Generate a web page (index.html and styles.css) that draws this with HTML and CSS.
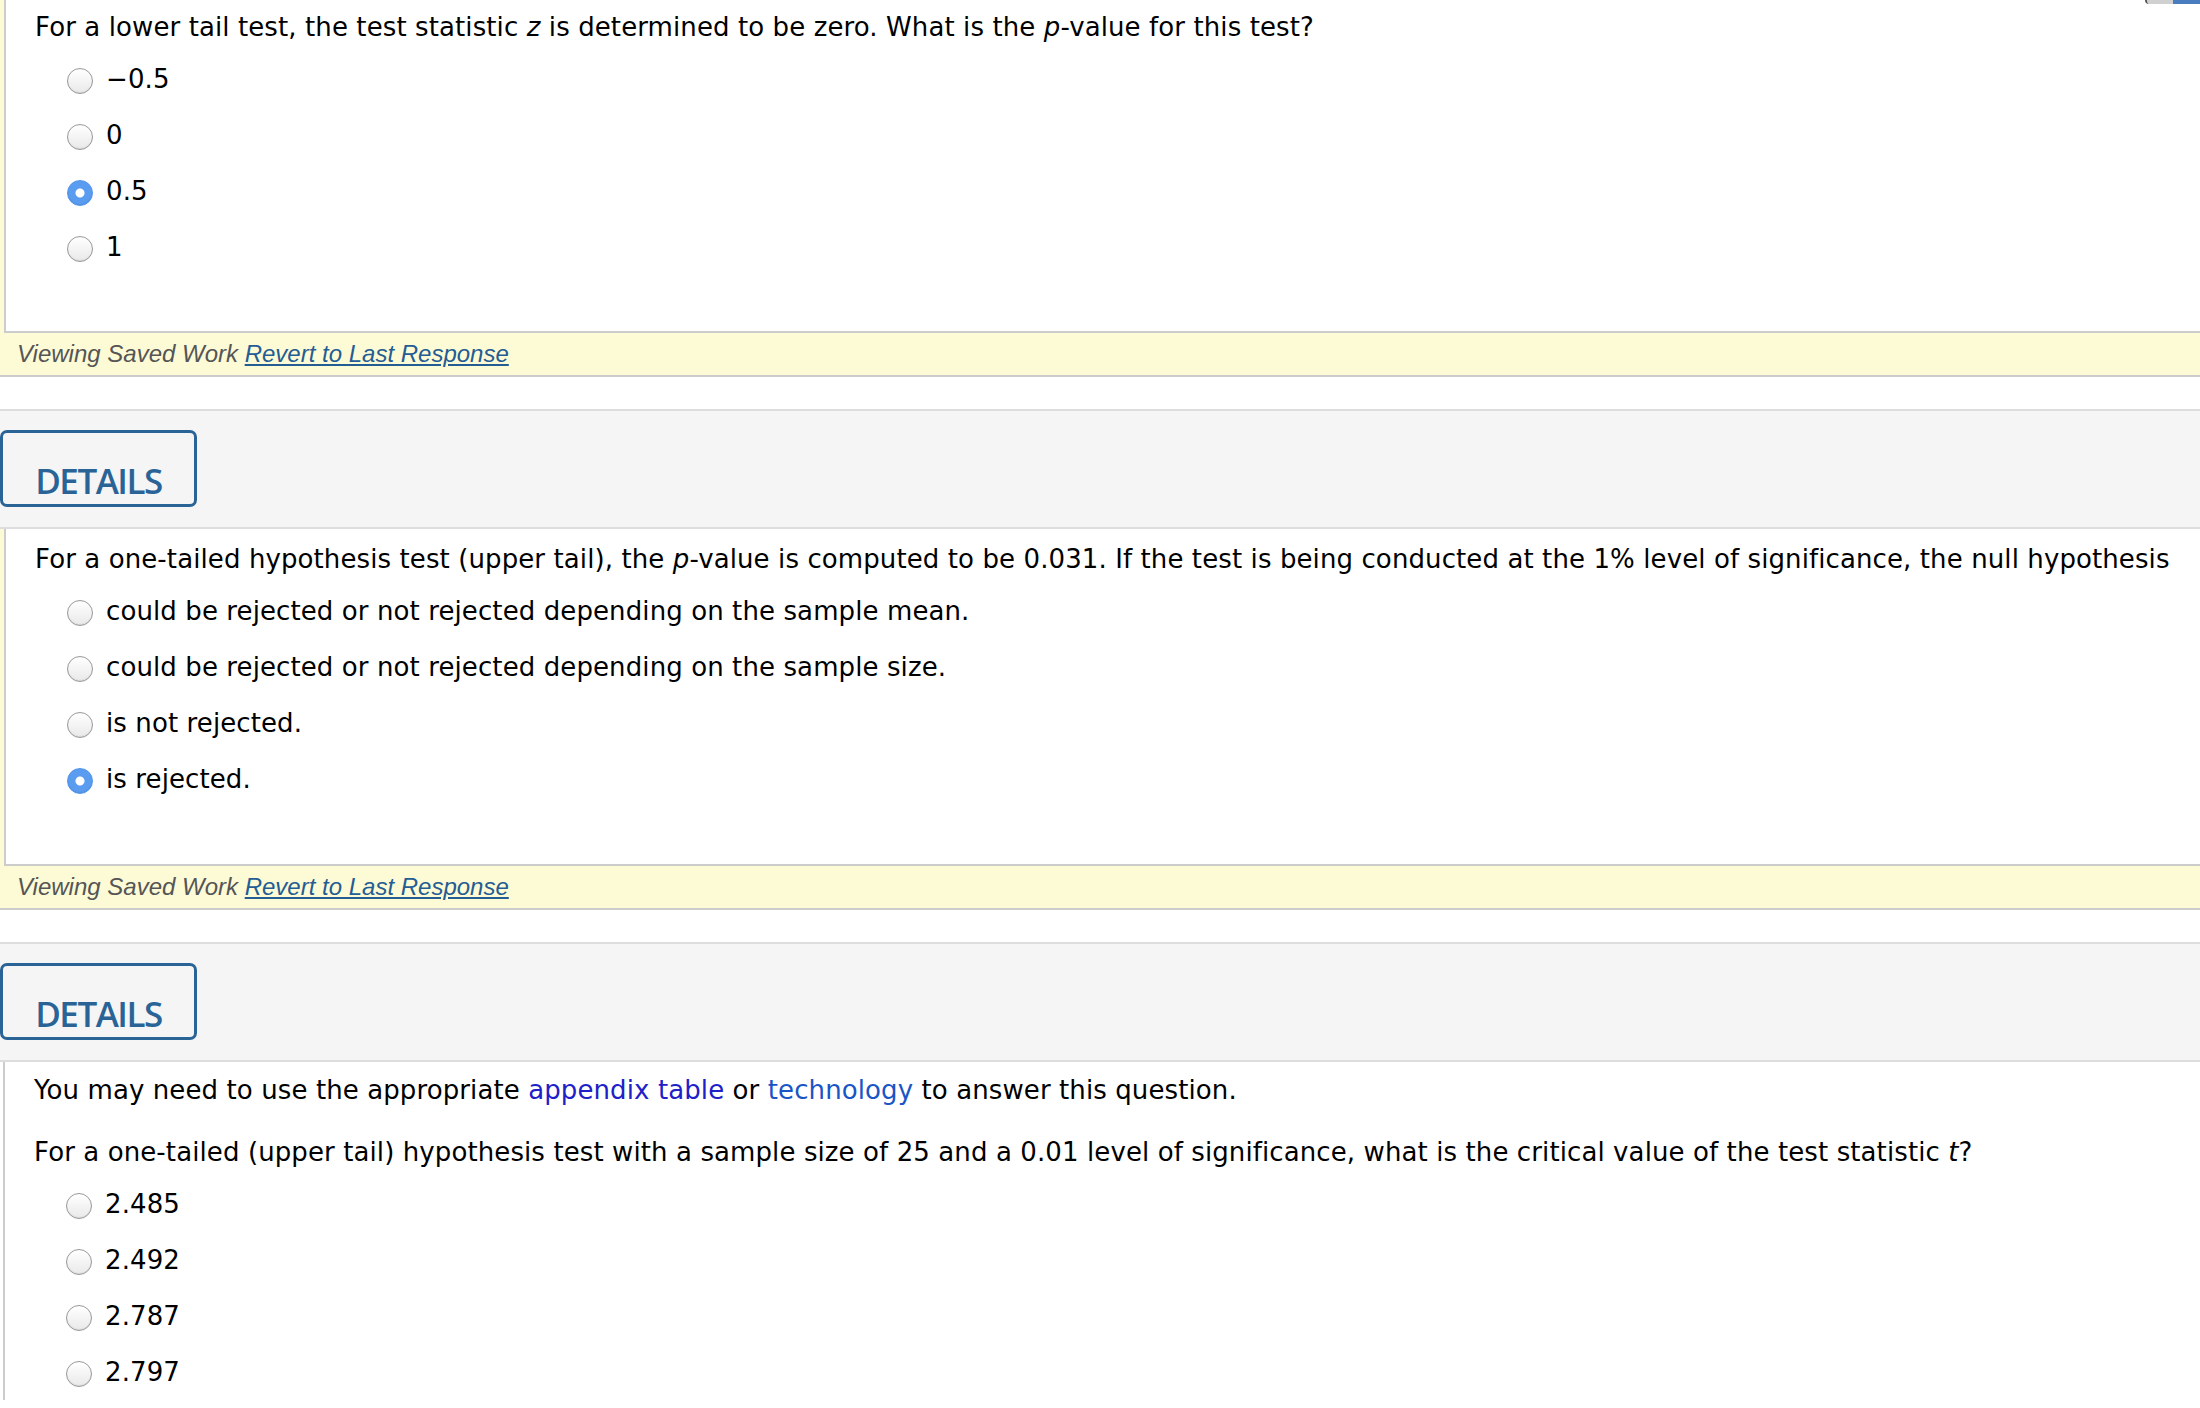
FILE: index.html
```html
<!DOCTYPE html>
<html lang="en">

<head>
    <meta charset="UTF-8">
    <meta name="viewport" content="width=device-width, initial-scale=1.0">
    <title>Hypothesis Testing Questions</title>
    <link rel="stylesheet" href="styles.css">
</head>

<body>
    <div class="topTab"></div>

    <!-- Question 1 -->
    <div class="question saved">
        <div class="qBody first">
            <p class="qText">For a lower tail test, the test statistic <i>z</i> is determined to be zero. What is the <i>p</i>-value for this test?</p>
            <div class="options">
                <label class="option"><input type="radio" name="q1"> &minus;0.5</label>
                <label class="option"><input type="radio" name="q1"> 0</label>
                <label class="option"><input type="radio" name="q1" checked> 0.5</label>
                <label class="option"><input type="radio" name="q1"> 1</label>
            </div>
        </div>
        <div class="savedBar">Viewing Saved Work <a href="#">Revert to Last Response</a></div>
    </div>

    <div class="band">
        <button class="detailsBtn">DETAILS</button>
    </div>

    <!-- Question 2 -->
    <div class="question saved">
        <div class="qBody">
            <p class="qText">For a one-tailed hypothesis test (upper tail), the <i>p</i>-value is computed to be 0.031. If the test is being conducted at the 1% level of significance, the null hypothesis</p>
            <div class="options">
                <label class="option"><input type="radio" name="q2"> could be rejected or not rejected depending on the sample mean.</label>
                <label class="option"><input type="radio" name="q2"> could be rejected or not rejected depending on the sample size.</label>
                <label class="option"><input type="radio" name="q2"> is not rejected.</label>
                <label class="option"><input type="radio" name="q2" checked> is rejected.</label>
            </div>
        </div>
        <div class="savedBar">Viewing Saved Work <a href="#">Revert to Last Response</a></div>
    </div>

    <div class="band">
        <button class="detailsBtn">DETAILS</button>
    </div>

    <!-- Question 3 -->
    <div class="question">
        <div class="qBody">
            <p class="qText">You may need to use the appropriate <a class="ref" href="#">appendix table</a> or <a class="ref tech" href="#">technology</a> to answer this question.</p>
            <p class="qText second">For a one-tailed (upper tail) hypothesis test with a sample size of 25 and a 0.01 level of significance, what is the critical value of the test statistic <i>t</i>?</p>
            <div class="options">
                <label class="option"><input type="radio" name="q3"> 2.485</label>
                <label class="option"><input type="radio" name="q3"> 2.492</label>
                <label class="option"><input type="radio" name="q3"> 2.787</label>
                <label class="option"><input type="radio" name="q3"> 2.797</label>
            </div>
        </div>
    </div>
</body>

</html>
```

FILE: styles.css
```css
body {
    margin: 0;
    background-color: #fff;
    font-family: "DejaVu Sans", Verdana, sans-serif;
    font-size: 26px;
    letter-spacing: 0.1px;
    color: #000;
    overflow: hidden;
}

.topTab {
    position: absolute;
    top: 0;
    right: 0;
    width: 53px;
    height: 4px;
    border-left: 2px solid #555;
    border-radius: 0 0 0 6px;
    background: linear-gradient(to right, #d0d0d0 0 26px, #4a7cc0 26px);
}

.question {
    background-color: #fff;
}

.question.saved {
    background-color: #fdfbd5;
}

.qBody {
    margin-left: 3px;
    border-left: 2px solid #ccc;
    background-color: #fff;
    padding: 11px 0 0 29px;
}

.saved .qBody {
    margin-left: 4px;
    border-bottom: 2px solid #ccc;
    padding-top: 13px;
    padding-bottom: 57px;
}

.saved .qBody.first {
    padding-top: 10px;
    padding-bottom: 56px;
}

.qText {
    margin: 0;
    line-height: 35px;
    white-space: nowrap;
}

.qText.second {
    margin-top: 27px;
}

.ref {
    color: #2020c8;
    text-decoration: none;
}

.ref.tech {
    color: #1a55c6;
}

.options {
    margin-top: 6px;
    padding-left: 32px;
}

.option {
    display: flex;
    align-items: center;
    height: 56px;
    line-height: 35px;
}

.option input {
    appearance: none;
    -webkit-appearance: none;
    flex: none;
    width: 26px;
    height: 26px;
    margin: 3px 13px 0 0;
    border-radius: 50%;
    border: 1px solid #999;
    background: linear-gradient(#ffffff, #e9e9e9);
    box-shadow: inset 0 -1px 1px rgba(0, 0, 0, 0.08);
}

.option input:checked {
    border-color: #4f93ec;
    background: radial-gradient(circle, #fff 0 4px, #5a9cf0 5px);
}

.savedBar {
    height: 42px;
    line-height: 42px;
    padding-left: 17px;
    border-bottom: 2px solid #ccc;
    font-family: "Liberation Sans", Arial, sans-serif;
    font-style: italic;
    font-size: 24px;
    letter-spacing: 0;
    color: #555;
}

.savedBar a {
    color: #245d94;
}

.band {
    margin-top: 32px;
    padding: 19px 0 20px;
    background-color: #f5f5f5;
    border-top: 2px solid #ddd;
    border-bottom: 2px solid #ddd;
}

.detailsBtn {
    display: block;
    width: 197px;
    height: 77px;
    padding: 24px 0 0 0;
    margin: 0;
    border: 3px solid #2a6496;
    border-radius: 7px;
    background-color: #f5f5f5;
    color: #2a6496;
    font-family: "Open Sans", sans-serif;
    font-weight: 600;
    font-size: 35px;
    letter-spacing: -1.5px;
    text-align: center;
    line-height: 40px;
    cursor: pointer;
}
```
